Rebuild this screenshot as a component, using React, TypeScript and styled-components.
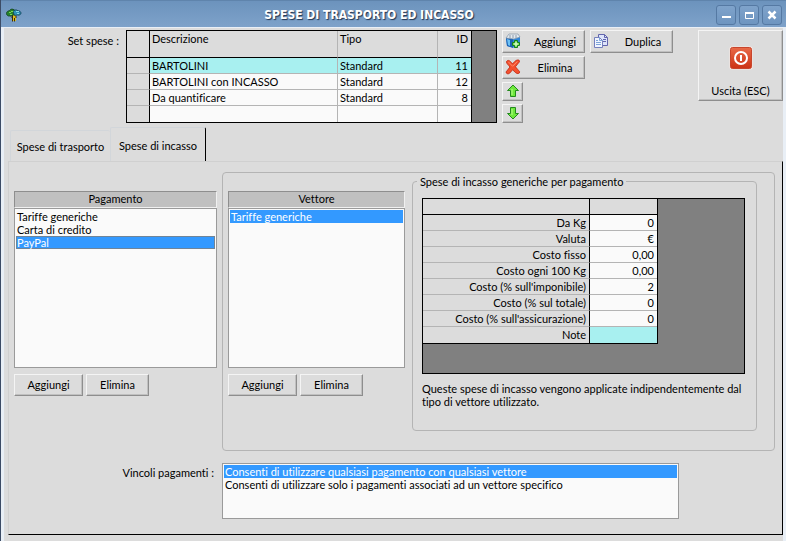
import React from "react";
import styled, { createGlobalStyle, css } from "styled-components";

const FACE = "#dcdcdc";
const LINE = "#b4b4b4";
const CYAN = "#a8f0f0";
const BLUE = "#3399ff";

const GlobalStyle = createGlobalStyle`
  *, *::before, *::after { box-sizing: border-box; }
  body { margin: 0; background: ${FACE}; }
  body, button, select, table {
    font-family: Lato, Tahoma, sans-serif;
    font-size: 11px;
    line-height: 13px;
    font-variant-ligatures: none;
    color: #000;
  }
`;

const Window = styled.div`
  display: flex;
  flex-direction: column;
  min-height: 100vh;
  background: ${FACE};
  border-left: 1px solid #3c4c66;
`;

const TitleBar = styled.header`
  display: flex;
  align-items: center;
  height: 27px;
  padding: 2px 4px 0 5px;
  border-top: 1px solid #5f84ac;
  background: linear-gradient(#6c93bd, #7ea2ca);
`;

const Title = styled.h1`
  flex: 1;
  margin: 0;
  text-align: center;
  font-family: "DejaVu Sans Condensed", "DejaVu Sans", Tahoma, sans-serif;
  font-size: 12px;
  line-height: 16px;
  font-weight: bold;
  color: #fff;
  text-shadow: 1px 1px 1px #1f3350;
`;

const Controls = styled.div`
  display: flex;
  gap: 3px;
`;

const ControlButton = styled.button`
  display: flex;
  align-items: center;
  justify-content: center;
  width: 20px;
  height: 20px;
  padding: 0;
  border: 1px solid #5579a3;
  border-radius: 3px;
  background: linear-gradient(#7fa3cb, #6e95c0);
`;

const Body = styled.main`
  flex: 1;
  display: flex;
  flex-direction: column;
  padding: 2px 0 6px 4px;
  border: solid #e9eff6;
  border-width: 1px 3px 0 3px;
`;

const Top = styled.section`
  display: flex;
  align-items: flex-start;
`;

const SetLabel = styled.h2`
  flex: 0 0 118px;
  margin: 0;
  padding: 4px 7px 0 0;
  text-align: right;
  font-size: 11px;
  line-height: 13px;
  font-weight: normal;
`;

const GridFrame = styled.div<{ $gap: number; $tail: number }>`
  padding: 0 ${(p) => p.$gap}px ${(p) => p.$tail}px 0;
  border: 1px solid #000;
  background: #808080;
`;

const SetFrame = styled(GridFrame)`
  flex: 0 0 371px;
`;

const CostFrame = styled(GridFrame)`
  margin-right: 8px;
`;

const Table = styled.table<{ $closed?: boolean }>`
  width: 100%;
  table-layout: fixed;
  border-collapse: separate;
  border-spacing: 0;
  border-right: 1px solid #000;
  border-bottom: ${(p) => (p.$closed ? "1px solid #000" : "0")};
`;

const Col = styled.col<{ $w?: number }>`
  ${(p) => p.$w && css`width: ${p.$w}px;`}
`;

const HeadCell = styled.th<{ $h: number; $right?: boolean; $dark?: boolean }>`
  height: ${(p) => p.$h}px;
  padding: 1px 3px 0 2px;
  border-bottom: 1px solid #000;
  border-right: 1px solid ${(p) => (p.$dark ? "#000" : LINE)};
  background: ${FACE};
  vertical-align: top;
  text-align: ${(p) => (p.$right ? "right" : "left")};
  font-weight: normal;
  &:last-child { border-right: 0; }
`;

const SideCell = styled.th`
  height: 16px;
  padding: 0 3px 1px 2px;
  border-right: 1px solid #000;
  border-bottom: 1px solid ${LINE};
  background: ${FACE};
  text-align: right;
  font-weight: normal;
  tr:last-child > & { border-bottom: 0; }
`;

const Cell = styled.td<{ $right?: boolean; $active?: boolean }>`
  height: 16px;
  padding: 0 3px 1px 2px;
  border-right: 1px solid ${LINE};
  border-bottom: 1px solid ${LINE};
  background: ${(p) => (p.$active ? CYAN : "#fafafa")};
  text-align: ${(p) => (p.$right ? "right" : "left")};
  white-space: nowrap;
  &:last-child { border-right: 0; }
  tr:last-child > & { border-bottom: 0; }
`;

const Button = styled.button<{ $w: number }>`
  width: ${(p) => p.$w}px;
  height: 22px;
  padding: 0 0 1px;
  border: 1px solid;
  border-color: #f4f4f4 #8e8e8e #8e8e8e #f4f4f4;
  background: ${FACE};
  box-shadow: inset -1px -1px 0 #c0c0c0;
`;

const IconTextButton = styled(Button)`
  display: flex;
  align-items: center;
  height: 23px;
  padding: 0 3px 2px 2px;
`;

const ButtonText = styled.span`
  flex: 1;
  padding: 2px 0 0 8px;
`;

const ArrowButton = styled(Button)`
  display: flex;
  align-items: center;
  justify-content: center;
  height: 19px;
`;

const ExitButton = styled(Button)`
  display: flex;
  flex-direction: column;
  align-items: center;
  justify-content: flex-end;
  gap: 14px;
  height: 71px;
  margin-left: auto;
  padding-bottom: 3px;
`;

const Tools = styled.div`
  display: grid;
  grid-template-columns: 83px 83px;
  gap: 3px 5px;
  margin-left: 5px;
`;

const Tabs = styled.div`
  display: flex;
  align-items: flex-end;
  height: 34px;
  margin-top: 4px;
  padding-left: 2px;
`;

const Tab = styled.button<{ $on?: boolean }>`
  height: ${(p) => (p.$on ? 34 : 31)}px;
  width: ${(p) => (p.$on ? 96 : 100)}px;
  padding: 1px 0 0;
  border: 0;
  border-top: 1px solid #d2d6da;
  border-left: 1px solid #d2d6da;
  border-right: ${(p) => (p.$on ? "1px solid #000" : "0")};
  border-radius: 2px 2px 0 0;
  background: ${FACE};
`;

const Panel = styled.section`
  flex: 1;
  display: flex;
  flex-direction: column;
  gap: 12px;
  padding: 10px 7px 15px 5px;
  border: 1px solid;
  border-color: #d0d0d0 #000 #000 #d0d0d0;
`;

const Split = styled.div`
  display: flex;
  flex: 1;
  gap: 5px;
`;

const PayColumn = styled.div`
  flex: 0 0 203px;
  padding-top: 19px;
`;

const CarrierColumn = styled.div`
  flex: 0 0 177px;
  padding-top: 18px;
`;

const CarrierGroup = styled.div`
  flex: 1;
  display: flex;
  gap: 7px;
  padding: 0 17px 19px 5px;
  border: 1px solid ${LINE};
  border-radius: 4px;
`;

const ListTitle = styled.label`
  display: block;
  height: 17px;
  border: 1px solid;
  border-color: #8e8e8e #f0f0f0 #f0f0f0 #8e8e8e;
  background: #c0c0c0;
  text-align: center;
`;

const Option = styled.option`
  height: 13px;
  min-height: 13px;
  padding: 0 1px;
  line-height: 13px;
  color: #000;
  &:checked {
    background: linear-gradient(${BLUE}, ${BLUE});
    color: #fff;
    -webkit-text-fill-color: #fff;
  }
`;

const List = styled.select<{ $h: number; $current?: boolean }>`
  display: block;
  width: 100%;
  height: ${(p) => p.$h}px;
  padding: 1px;
  border: 1px solid #9a9a9a;
  border-radius: 0;
  background: #fafafa;
  overflow: hidden;
  outline: 0;
  ${Option}:checked {
    box-shadow: ${(p) => (p.$current ? "inset 0 0 0 1px #6f8498" : "none")};
  }
`;

const ListActions = styled.div`
  display: flex;
  gap: 3px;
  padding-top: 6px;
`;

const CostGroup = styled.fieldset`
  flex: 1;
  min-width: 0;
  margin: 2px 0 0;
  padding: 10px 3px 0 9px;
  border: 1px solid ${LINE};
  border-radius: 4px;
`;

const Legend = styled.legend`
  margin-left: -5px;
  padding: 0 3px;
`;

const Note = styled.p`
  margin: 8px 0 0;
`;

const RuleRow = styled.div`
  display: flex;
`;

const RuleLabel = styled.label`
  flex: 0 0 208px;
  padding: 3px 8px 0 0;
  text-align: right;
`;

const RuleBox = styled.div`
  flex: 0 1 457px;
`;

const TreeIcon = () => (
  <svg width="16" height="16" viewBox="0 0 16 16" aria-hidden="true">
    <path d="M6 8h4v6H6z" fill="#e0c020" />
    <path d="M6.500 8v6.500M5 9.500l1.500 1.500M10 9v2M8.500 11v3.500" fill="none" stroke="#3a2c08" />
    <path d="M.5 6.500C.5 4.500 2 4 3.500 3.500 4.500 2 6.500 1.500 8.500 3l.5 4-3 1.800L2.500 9C1 8.500.5 7.500.5 6.500z" fill="#25822c" stroke="#12401a" strokeWidth="0.8" />
    <path d="M7 4.500C8 2.500 11 2.500 12 3.800c1.800 0 3 1 3 2.400S13 8.500 11.500 8L8.500 8.500z" fill="#2b93b8" stroke="#123c50" strokeWidth="0.8" />
    <path d="M3 5.500h2M5 4.500h2M4 7.500h2" stroke="#7ad650" />
    <path d="M10 4.500h3M11 6.500h2" stroke="#84d8e8" />
  </svg>
);

const BoxAddIcon = () => (
  <svg width="16" height="16" viewBox="0 0 16 16" aria-hidden="true">
    <path d="M1 5l3-3h9l2 2v7l-5 4-8-2z" fill="#2f86d8" />
    <path d="M1 5l7 1v9l-6-2z" fill="#1b62b4" />
    <path d="M2 6l3 1v6l-2-1z" fill="#6cc0f4" />
    <path d="M1 5l3-4h9l2 3-6 2z" fill="#e4e9ee" stroke="#8795a5" strokeWidth="0.7" />
    <path d="M5 2v3M8 2v3M11 2v3" stroke="#8d9baa" />
    <path d="M9.500 7.500h3v2h2v3h-2v2h-3v-2h-2v-3h2z" fill="#7ce05a" stroke="#17801c" />
    <path d="M11 9v4M9 11h4" stroke="#e4ffd8" />
  </svg>
);

const CrossIcon = () => (
  <svg width="16" height="16" viewBox="0 0 16 16" aria-hidden="true">
    <path
      d="M1.500 2.500C3 0.500 4.800 1.200 7.500 5 9.500 2.500 11.500 0.300 14 1.200c1 .8.400 2-.6 2.800L10.400 7.800c2 2.400 3.400 3.600 4.200 5 .4 1.800-2.200 2.400-3.800 1L7.600 10.800 4.600 14.200C3 15.600 .6 14.600 1.200 12.800L5 8C3.600 6 1.200 4.600 1.500 2.500z"
      fill="#f4502e" stroke="#c42a14" strokeWidth="0.9"
    />
    <path d="M3.500 3L7.600 7.300l4.700-4.700" fill="none" stroke="#ff9272" strokeWidth="0.9" />
  </svg>
);

const CopyIcon = () => (
  <svg width="16" height="16" viewBox="0 0 16 16" aria-hidden="true">
    <path d="M5.500 1.500h6l3 3v8h-9z" fill="#dde4fa" stroke="#6265ad" />
    <path d="M11.500 1.500v3h3M10 6.500h3M10 8.500h3" fill="none" stroke="#6265ad" />
    <path d="M1.500 4.500h5l3 3v7h-8z" fill="#f1f5ff" stroke="#7580bd" />
    <path d="M6.500 4.500v3h3M3 7.500h2M3 9.500h5M3 11.500h5" fill="none" stroke="#7da4d8" />
  </svg>
);

const ArrowIcon = ({ down }: { down?: boolean }) => (
  <svg width="14" height="14" viewBox="0 0 14 14" aria-hidden="true">
    <path
      d={down ? "M7 13L1.500 7.500h3v-6h5v6h3z" : "M7 1l5.500 5.500h-3v6h-5v-6h-3z"}
      fill="#6fe83c" stroke="#248a1e" strokeLinejoin="round"
    />
    <path d={down ? "M6 3v6" : "M6 5v6"} stroke="#b8ff8c" />
  </svg>
);

const PowerIcon = () => (
  <svg width="24" height="24" viewBox="0 0 24 24" aria-hidden="true">
    <defs>
      <linearGradient id="power" x1="0" y1="0" x2="0" y2="1">
        <stop offset="0" stopColor="#e86a48" />
        <stop offset="1" stopColor="#cc3214" />
      </linearGradient>
    </defs>
    <rect x="0.500" y="0.500" width="23" height="23" rx="2" fill="#f8e8e2" />
    <rect x="1.500" y="1.500" width="21" height="21" rx="2" fill="url(#power)" stroke="#c8452c" />
    <circle cx="12" cy="12" r="6" fill="none" stroke="#fff" strokeWidth="2" />
    <path d="M12 9v6" stroke="#fff" strokeWidth="2" />
  </svg>
);

const sets = [
  { name: "BARTOLINI", type: "Standard", id: "11" },
  { name: "BARTOLINI con INCASSO", type: "Standard", id: "12" },
  { name: "Da quantificare", type: "Standard", id: "8" },
  { name: "", type: "", id: "" },
];

const costs = [
  ["Da Kg", "0"],
  ["Valuta", "€"],
  ["Costo fisso", "0,00"],
  ["Costo ogni 100 Kg", "0,00"],
  ["Costo (% sull'imponibile)", "2"],
  ["Costo (% sul totale)", "0"],
  ["Costo (% sull'assicurazione)", "0"],
  ["Note", ""],
];

type ListBoxProps = { id: string; items: string[]; selected: string; height: number; current?: boolean };

const ListBox = ({ id, items, selected, height, current }: ListBoxProps) => (
  <List id={id} size={4} defaultValue={selected} $h={height} $current={current}>
    {items.map((item) => (
      <Option key={item} value={item}>{item}</Option>
    ))}
  </List>
);

const Actions = () => (
  <ListActions>
    <Button type="button" $w={69}>Aggiungi</Button>
    <Button type="button" $w={63}>Elimina</Button>
  </ListActions>
);

export default function App() {
  return (
    <>
      <GlobalStyle />
      <Window>
        <TitleBar>
          <TreeIcon />
          <Title>SPESE DI TRASPORTO ED INCASSO</Title>
          <Controls>
            <ControlButton type="button" aria-label="Riduci">
              <svg width="12" height="12" viewBox="0 0 12 12"><path d="M2 8h9" stroke="#fff" strokeWidth="2" /></svg>
            </ControlButton>
            <ControlButton type="button" aria-label="Ingrandisci">
              <svg width="12" height="12" viewBox="0 0 12 12"><path d="M2.500 4v5.500h8V4" fill="none" stroke="#fff" /><path d="M2 4h9" stroke="#fff" strokeWidth="2" /></svg>
            </ControlButton>
            <ControlButton type="button" aria-label="Chiudi">
              <svg width="12" height="12" viewBox="0 0 12 12"><path d="M2.500 2.500l7 7M9.500 2.500l-7 7" stroke="#fff" strokeWidth="2.500" /></svg>
            </ControlButton>
          </Controls>
        </TitleBar>
        <Body>
          <Top>
            <SetLabel id="set-label">Set spese :</SetLabel>
            <SetFrame $gap={24} $tail={0}>
              <Table aria-labelledby="set-label">
                <colgroup>
                  <Col $w={23} />
                  <Col />
                  <Col $w={100} />
                  <Col $w={33} />
                </colgroup>
                <thead>
                  <tr>
                    <HeadCell $h={27} $dark />
                    <HeadCell $h={27}>Descrizione</HeadCell>
                    <HeadCell $h={27}>Tipo</HeadCell>
                    <HeadCell $h={27} $right>ID</HeadCell>
                  </tr>
                </thead>
                <tbody>
                  {sets.map((s, i) => (
                    <tr key={i}>
                      <SideCell />
                      <Cell $active={i === 0}>{s.name}</Cell>
                      <Cell $active={i === 0}>{s.type}</Cell>
                      <Cell $active={i === 0} $right>{s.id}</Cell>
                    </tr>
                  ))}
                </tbody>
              </Table>
            </SetFrame>
            <Tools>
              <IconTextButton type="button" $w={83}><BoxAddIcon /><ButtonText>Aggiungi</ButtonText></IconTextButton>
              <IconTextButton type="button" $w={83}><CopyIcon /><ButtonText>Duplica</ButtonText></IconTextButton>
              <IconTextButton type="button" $w={83}><CrossIcon /><ButtonText>Elimina</ButtonText></IconTextButton>
              <span />
              <ArrowButton type="button" $w={21} aria-label="Sposta su"><ArrowIcon /></ArrowButton>
              <span />
              <ArrowButton type="button" $w={21} aria-label="Sposta giù"><ArrowIcon down /></ArrowButton>
            </Tools>
            <ExitButton type="button" $w={85}><PowerIcon />Uscita (ESC)</ExitButton>
          </Top>
          <Tabs role="tablist">
            <Tab type="button" role="tab" aria-selected="false">Spese di trasporto</Tab>
            <Tab type="button" role="tab" aria-selected="true" $on>Spese di incasso</Tab>
          </Tabs>
          <Panel role="tabpanel">
            <Split>
              <PayColumn>
                <ListTitle htmlFor="pagamento">Pagamento</ListTitle>
                <ListBox id="pagamento" height={160} current selected="PayPal" items={["Tariffe generiche", "Carta di credito", "PayPal"]} />
                <Actions />
              </PayColumn>
              <CarrierGroup>
                <CarrierColumn>
                  <ListTitle htmlFor="vettore">Vettore</ListTitle>
                  <ListBox id="vettore" height={160} selected="Tariffe generiche" items={["Tariffe generiche"]} />
                  <Actions />
                </CarrierColumn>
                <CostGroup>
                  <Legend>Spese di incasso generiche per pagamento</Legend>
                  <CostFrame $gap={86} $tail={29}>
                    <Table $closed>
                      <colgroup>
                        <Col />
                        <Col $w={67} />
                      </colgroup>
                      <thead>
                        <tr>
                          <HeadCell $h={16} $dark />
                          <HeadCell $h={16} />
                        </tr>
                      </thead>
                      <tbody>
                        {costs.map(([label, value]) => (
                          <tr key={label}>
                            <SideCell scope="row">{label}</SideCell>
                            <Cell $right $active={label === "Note"}>{value}</Cell>
                          </tr>
                        ))}
                      </tbody>
                    </Table>
                  </CostFrame>
                  <Note>Queste spese di incasso vengono applicate indipendentemente dal tipo di vettore utilizzato.</Note>
                </CostGroup>
              </CarrierGroup>
            </Split>
            <RuleRow>
              <RuleLabel htmlFor="vincoli">Vincoli pagamenti :</RuleLabel>
              <RuleBox>
                <ListBox
                  id="vincoli"
                  height={56}
                  selected="Consenti di utilizzare qualsiasi pagamento con qualsiasi vettore"
                  items={[
                    "Consenti di utilizzare qualsiasi pagamento con qualsiasi vettore",
                    "Consenti di utilizzare solo i pagamenti associati ad un vettore specifico",
                  ]}
                />
              </RuleBox>
            </RuleRow>
          </Panel>
        </Body>
      </Window>
    </>
  );
}
